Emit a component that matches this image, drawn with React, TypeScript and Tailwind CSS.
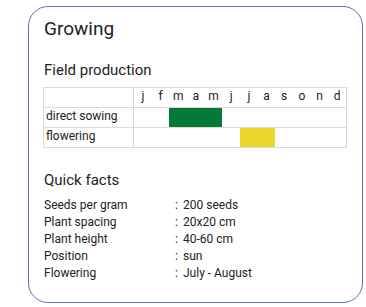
const months = ["j", "f", "m", "a", "m", "j", "j", "a", "s", "o", "n", "d"];

const rows = [
  { label: "direct sowing", from: 2, to: 5, color: "bg-[#047a36]" },
  { label: "flowering", from: 6, to: 8, color: "bg-[#ebd72b]" },
];

const facts = [
  ["Seeds per gram", "200 seeds"],
  ["Plant spacing", "20x20 cm"],
  ["Plant height", "40-60 cm"],
  ["Position", "sun"],
  ["Flowering", "July - August"],
];

export default function App() {
  return (
    <div className="w-[366px] h-[307px] bg-white pt-[6px] pl-[28px] font-['Roboto',sans-serif] text-[#222]">
      <div className="w-[335px] h-[297px] border border-[#5a74b5] rounded-[20px] px-[14px] pt-[9px]">
        {/* header */}
        <h1 className="text-[19px] leading-[26px] pl-[1px]">Growing</h1>

        {/* calendar */}
        <h2 className="mt-[17px] text-[15px] leading-[22px] pl-[1px]">Field production</h2>
        <div className="mt-[6px] w-[304px] border border-[#dadada] text-[12px] leading-[16px]">
          <div className="flex h-[19px]">
            <div className="w-[90px] border-r border-[#dadada]" />
            <div className="flex-1 grid grid-cols-12">
              {months.map((m, i) => (
                <span key={i} className="text-center">{m}</span>
              ))}
            </div>
          </div>
          {rows.map((r) => (
            <div key={r.label} className="flex h-[20px] border-t border-[#dadada]">
              <div className="w-[90px] border-r border-[#dadada] pl-[2px]">{r.label}</div>
              <div className="flex-1 grid grid-cols-12">
                {months.map((_, i) => (
                  <div key={i} className={i >= r.from && i < r.to ? r.color : ""} />
                ))}
              </div>
            </div>
          ))}
        </div>

        {/* facts */}
        <h2 className="mt-[21px] text-[15px] leading-[22px] pl-[1px]">Quick facts</h2>
        <div className="mt-[6px] text-[12px] leading-[17px] pl-[1px]">
          {facts.map(([k, v]) => (
            <div key={k} className="flex">
              <span className="w-[131px]">{k}</span>
              <span className="w-[8px]">:</span>
              <span>{v}</span>
            </div>
          ))}
        </div>
      </div>
    </div>
  );
}
